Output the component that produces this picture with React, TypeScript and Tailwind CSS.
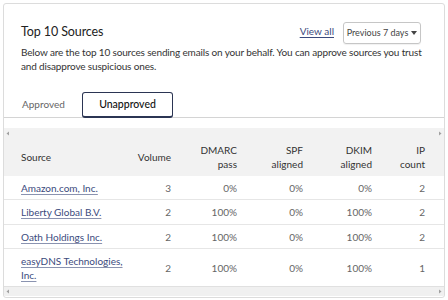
import React from "react";

const rows = [
  { name: "Amazon.com, Inc.", vol: "3", dmarc: "0%", spf: "0%", dkim: "0%", ip: "2", h: "h-[24px]" },
  { name: "Liberty Global B.V.", vol: "2", dmarc: "100%", spf: "0%", dkim: "100%", ip: "2", h: "h-[25px]" },
  { name: "Oath Holdings Inc.", vol: "2", dmarc: "100%", spf: "0%", dkim: "100%", ip: "2", h: "h-[24px]" },
  { name: "easyDNS Technologies, Inc.", vol: "2", dmarc: "100%", spf: "0%", dkim: "100%", ip: "1", h: "h-[37px]" },
];

const grid = "grid grid-cols-[126px_41px_66px_66px_69px_53px_19px]";

function LeftArrow() {
  return (
    <svg width="4" height="5" viewBox="0 0 4 5">
      <path d="M3 0.5 L0.5 2.5 L3 4.5 Z" fill="#a0a0a0" />
    </svg>
  );
}
function RightArrow() {
  return (
    <svg width="4" height="5" viewBox="0 0 4 5">
      <path d="M1 0.5 L3.5 2.5 L1 4.5 Z" fill="#a0a0a0" />
    </svg>
  );
}

export default function App() {
  return (
    <div className="w-[448px] h-[300px] bg-white pt-[3px] pl-[3px]" style={{ fontFamily: 'Lato, "Open Sans", sans-serif' }}>
      <div className="w-[442px] h-[295px] border border-[#dcdcdc] rounded-[3px] overflow-hidden flex flex-col">
        {/* header */}
        <div className="flex items-start justify-between pl-[17px] pr-[23px] pt-[17px]">
          <div className="mt-[1px] text-[12.5px] tracking-[-0.1px] leading-[20px] text-[#222]">Top 10 Sources</div>
          <div className="flex items-start">
            <a className="mt-[2px] text-[10px] leading-[16px] text-[#3b4a7d] underline underline-offset-2 decoration-[#3b4a7d]">View all</a>
            <div className="ml-[9px] mt-[1px] w-[78px] h-[22px] border border-[#c6c6c6] rounded-[3px] shadow-[0_1px_1px_rgba(0,0,0,0.06)] flex items-center justify-center gap-[3px] text-[9px] text-[#444]">
              <span>Previous 7 days</span>
              <svg width="6" height="4" viewBox="0 0 6 4">
                <path d="M0 0 H6 L3 4 Z" fill="#444" />
              </svg>
            </div>
          </div>
        </div>
        {/* description */}
        <div className="mt-[1px] pl-[17px] w-[421px] text-[10px] tracking-[-0.15px] leading-[14px] text-[#333]">
          Below are the top 10 sources sending emails on your behalf. You can approve sources you trust and disapprove suspicious ones.
        </div>
        {/* tabs */}
        <div className="mt-[19px] flex items-end border-b border-[#d4d4d4] h-[26px] pl-[18px]">
          <div className="w-[60px] h-[26px] flex items-center text-[10px] text-[#666]">Approved</div>
          <div className="w-[91px] h-[26px] mb-[-1px] border border-[#2b3553] border-b-2 rounded-[3px] flex items-center justify-center text-[10.5px] font-medium text-[#111]">
            Unapproved
          </div>
        </div>
        {/* table */}
        <div className="mt-[10px] bg-[#f2f2f2]">
          <div className="h-[10px] flex items-center justify-between px-[2px]">
            <LeftArrow />
            <RightArrow />
          </div>
          <div className={`${grid} h-[38px] items-center text-[10px] leading-[14px] text-[#333]`}>
            <div className="pl-[17px]">Source</div>
            <div className="text-right">Volume</div>
            <div className="text-right">DMARC<br />pass</div>
            <div className="text-right">SPF<br />aligned</div>
            <div className="text-right">DKIM<br />aligned</div>
            <div className="text-right">IP<br />count</div>
            <div />
          </div>
        </div>
        {rows.map((r, i) => (
          <div key={i} className={`${grid} ${r.h} items-center text-[10px] leading-[14px] text-[#666] ${i < rows.length - 1 ? "border-b border-[#e6e6e6]" : ""}`}>
            <div className="pl-[17px] pr-[4px]">
              <a className="text-[#3b4a7d] underline underline-offset-2 decoration-[#8a93b0]">{r.name}</a>
            </div>
            <div className="text-right">{r.vol}</div>
            <div className="text-right">{r.dmarc}</div>
            <div className="text-right">{r.spf}</div>
            <div className="text-right">{r.dkim}</div>
            <div className="text-right">{r.ip}</div>
            <div />
          </div>
        ))}
        <div className="h-[10px] bg-[#f0f0f0] border-t border-[#e0e0e0] flex items-center justify-between px-[2px]">
          <LeftArrow />
          <RightArrow />
        </div>
      </div>
    </div>
  );
}
